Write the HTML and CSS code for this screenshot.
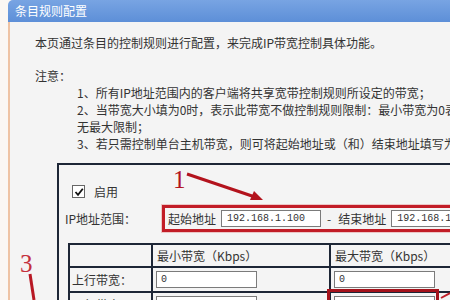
FILE: index.html
```html
<!DOCTYPE html>
<html lang="zh-CN">
<head>
    <meta charset="UTF-8">
    <title>条目规则配置</title>
    <link rel="stylesheet" href="styles.css">
</head>
<body>
    <div class="page">
        <div class="titlebar">条目规则配置</div>
        <div class="panel">
            <p class="intro">本页通过条目的控制规则进行配置，来完成IP带宽控制具体功能。</p>
            <p class="note-title">注意：</p>
            <div class="notes">
                <p>1、所有IP地址范围内的客户端将共享宽带控制规则所设定的带宽；</p>
                <p>2、当带宽大小填为0时，表示此带宽不做控制规则限制：最小带宽为0表示无最小带宽保证，最大带宽为0表示<br>无最大限制；</p>
                <p>3、若只需控制单台主机带宽，则可将起始地址或（和）结束地址填写为该主机IP地址。</p>
            </div>

            <div class="rule-box">
                <div class="enable">
                    <span class="check">
                        <svg width="10" height="10" viewBox="0 0 10 10"><path d="M1.5 5 L4 7.8 L8.8 1.8" fill="none" stroke="#111" stroke-width="1.8"/></svg>
                    </span>
                    <span>启用</span>
                </div>

                <div class="ip-row">
                    <span class="ip-label">IP地址范围：</span>
                    <span class="ip-range">
                        <span>起始地址</span>
                        <input class="field ip-field" type="text" value="192.168.1.100">
                        <span class="sep">-</span>
                        <span class="end-label">结束地址</span>
                        <input class="field ip-field" type="text" value="192.168.1.200">
                    </span>
                </div>

                <div class="bw-grid">
                    <div class="cell"></div>
                    <div class="cell head">最小带宽（Kbps）</div>
                    <div class="cell head">最大带宽（Kbps）</div>

                    <div class="cell label">上行带宽：</div>
                    <div class="cell"><input class="field bw-field" type="text" value="0"></div>
                    <div class="cell"><input class="field bw-field" type="text" value="0"></div>

                    <div class="cell label">下行带宽：</div>
                    <div class="cell"><input class="field bw-field" type="text" value="0"></div>
                    <div class="cell"><input class="field bw-field" type="text" value="0"></div>
                </div>
            </div>
        </div>
    </div>

    <!-- hand-drawn markers on top of the screenshot -->
    <svg class="marks" width="450" height="300" viewBox="0 0 450 300">
        <text x="173" y="188" class="mark-num">1</text>
        <line x1="187" y1="174" x2="255" y2="197" stroke="#b3131d" stroke-width="3"/>
        <polygon points="263,200 250,200 254,191" fill="#b3131d"/>
        <text x="20" y="272" class="mark-num light">3</text>
        <line x1="30" y1="274" x2="34" y2="300" stroke="#b81824" stroke-width="3"/>
        <rect x="328.5" y="290.5" width="109" height="20" fill="none" stroke="#a5121b" stroke-width="3"/>
        <line x1="441" y1="298" x2="450" y2="293" stroke="#c0202a" stroke-width="2"/>
    </svg>
</body>
</html>
```

FILE: styles.css
```css
body {
    margin: 0;
    background-color: #fbf7f3;
    font-family: "Noto Sans CJK SC", sans-serif;
    font-size: 12px;
    color: #333;
    overflow: hidden;
}

.page {
    margin-left: 8px;
    width: 800px;
}

.titlebar {
    height: 22px;
    line-height: 22px;
    padding-left: 7px;
    color: #fff;
    background: linear-gradient(#78a4e3, #5d8fd8);
    border-radius: 5px 0 0 0;
}

.panel {
    background-color: #f4f4f4;
    border-left: 2px solid #efc3a3;
    padding: 12px 0 0 25px;
    min-height: 300px;
}

p {
    margin: 0;
    line-height: 17px;
    white-space: nowrap;
}

.intro {
    margin-bottom: 16px;
}

.notes {
    padding-left: 42px;
}

.rule-box {
    margin: 11px 0 0 22px;
    width: 700px;
    height: 200px;
    border: 2px solid #1d2636;
}

.enable {
    display: flex;
    align-items: center;
    height: 17px;
    padding: 18px 0 0 13px;
}

.check {
    width: 11px;
    height: 11px;
    border: 1px solid #666;
    background-color: #fff;
    margin-right: 9px;
    display: flex;
    align-items: center;
    justify-content: center;
}

.ip-row {
    display: flex;
    align-items: center;
    margin-top: 5px;
    padding-left: 6px;
}

.ip-label {
    width: 97px;
}

.ip-range {
    display: flex;
    align-items: center;
    height: 27px;
    box-sizing: border-box;
    border: 3px solid #c21d27;
    box-shadow: 0 0 0 1px rgba(225, 130, 130, 0.4);
    padding: 0 40px 0 3px;
}

.field {
    box-sizing: border-box;
    height: 17px;
    border: 1px solid #7b7b7b;
    background-color: #fff;
    font-family: "Liberation Mono", monospace;
    font-size: 10px;
    color: #333;
    padding: 0 0 0 4px;
    outline: none;
}

.ip-field {
    width: 100px;
    margin-left: 5px;
    padding-left: 5px;
}

.sep {
    margin-left: 6px;
}

.end-label {
    margin-left: 7px;
}

.bw-grid {
    display: grid;
    grid-template-columns: 83px 178px 180px;
    grid-template-rows: 23px 25px 25px;
    width: max-content;
    margin: 11px 0 0 9px;
    border-top: 2px solid #1d2636;
    border-left: 2px solid #1d2636;
}

.cell {
    box-sizing: border-box;
    border-right: 2px solid #1d2636;
    border-bottom: 2px solid #1d2636;
    display: flex;
    align-items: center;
    padding-left: 3px;
}

.cell.head {
    padding-left: 4px;
}

.cell.label {
    padding-left: 2px;
}

.bw-field {
    width: 101px;
}

.marks {
    position: absolute;
    top: 0;
    left: 0;
    pointer-events: none;
}

.mark-num {
    font-family: "Liberation Serif", serif;
    font-size: 25px;
    fill: #b3131d;
}

.mark-num.light {
    fill: #c4303c;
}
```
